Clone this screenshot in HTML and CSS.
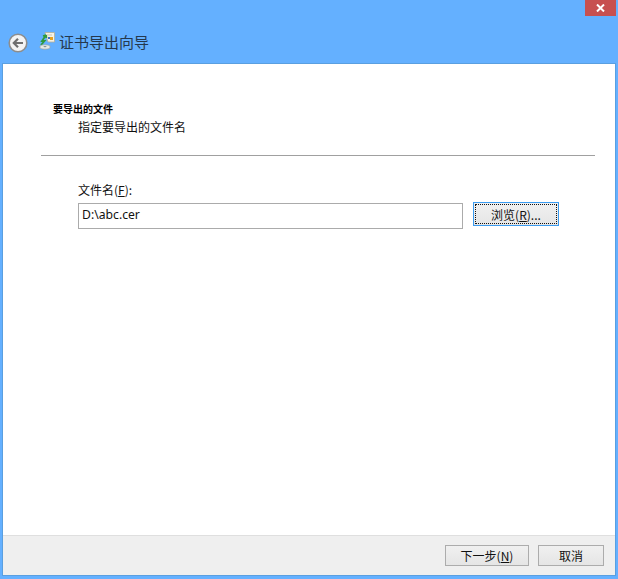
FILE: index.html
```html
<!DOCTYPE html>
<html lang="zh-CN">
<head>
<meta charset="utf-8">
<title>证书导出向导</title>
<link rel="stylesheet" href="styles.css">
</head>
<body>
<div class="window">
  <div class="titlebar">
    <div class="close"><svg width="9" height="8" viewBox="0 0 9 8"><path d="M1 0.5 L8 7.5 M8 0.5 L1 7.5" stroke="#fff" stroke-width="2"/></svg></div>
  </div>
  <div class="nav">
    <svg class="back" width="20" height="20" viewBox="0 0 20 20">
      <circle cx="10" cy="10" r="8.8" fill="#f4f4f4" stroke="#8d8d8d" stroke-width="1.6"/>
      <path d="M15 10 H6 M10 5.8 L5.8 10 L10 14.2" fill="none" stroke="#6f6f6f" stroke-width="2.2"/>
    </svg>
    <svg class="cert" width="16" height="18" viewBox="0 0 16 18">
      <path d="M6 0.5 H15.5 V10 H9 Z" fill="#f6f2e4" stroke="#b4ae98" stroke-width="0.8"/>
      <path d="M8 3 H13" stroke="#c9c4b2" stroke-width="1"/>
      <rect x="11" y="5" width="3" height="3" fill="#e6a21f"/>
      <rect x="9" y="5" width="2" height="2" fill="#3f6fc4"/>
      <path d="M7 3 L3 9 L5.5 9 L2 13 M7 3 L4 4 M7 3 L7.5 6" stroke="#2f9a3c" stroke-width="1.8" fill="none"/>
      <ellipse cx="6" cy="15" rx="5.2" ry="2.2" fill="#e6e9e6" stroke="#9aa5a5" stroke-width="0.7"/>
      <ellipse cx="6" cy="14.6" rx="1.6" ry="0.7" fill="#7e8f8f"/>
    </svg>
    <span class="nav-title">证书导出向导</span>
  </div>
  <div class="panel">
    <div class="main">
      <div class="head">
        <div class="head-title">要导出的文件</div>
        <div class="head-sub">指定要导出的文件名</div>
      </div>
      <div class="rule"></div>
      <div class="form">
        <div class="label">文件名(<u>F</u>):</div>
        <div class="row">
          <div class="input">D:\abc.cer</div>
          <div class="btn browse"><span class="focus">浏览(<u>R</u>)...</span></div>
        </div>
      </div>
    </div>
    <div class="footer">
      <div class="btn next">下一步(<u>N</u>)</div>
      <div class="btn cancel">取消</div>
    </div>
  </div>
</div>
</body>
</html>
```
FILE: styles.css
```css
html, body { margin: 0; padding: 0; height: 100%; }
body { background: #64b0ff; font-family: "Noto Sans CJK SC", "Liberation Sans", sans-serif; color: #111; overflow: hidden; }
.window { width: 618px; height: 579px; display: flex; flex-direction: column; box-sizing: border-box; padding: 0 2px 3px 2px; }
.titlebar { height: 16px; display: flex; justify-content: flex-end; flex: none; }
.close { width: 31px; height: 16px; margin-right: 0; background: #c75050; display: flex; align-items: center; justify-content: center; }
.nav { height: 47px; flex: none; display: flex; align-items: center; box-sizing: border-box; padding: 6px 0 0 6px; }
.back { flex: none; }
.cert { flex: none; margin-left: 11px; margin-bottom: 3px; }
.nav-title { font-size: 15px; line-height: 20px; margin: 0 0 2px 4px; color: #25384d; }
.panel { flex: 1; display: flex; flex-direction: column; background: #fff; border: 1px solid #5a9fe0; min-height: 0; }
.main { flex: 1; padding: 0 20px 0 38px; }
.head { padding: 38px 0 0 12px; height: 54px; box-sizing: content-box; }
.head-title { font-size: 10px; line-height: 14px; font-weight: 700; color: #000; }
.head-sub { font-size: 12px; line-height: 16px; margin: 3px 0 0 25px; color: #111; }
.rule { height: 1px; background: #a0a0a0; margin-top: -1px; }
.form { padding: 26px 0 0 37px; }
.label { font-size: 12px; line-height: 16px; }
.row { display: flex; margin-top: 5px; }
.input { width: 385px; height: 26px; box-sizing: border-box; border: 1px solid #ababab; font-size: 12.2px; line-height: 21px; padding: 0 3px; font-family: "Noto Sans", sans-serif; }
.btn { box-sizing: border-box; display: flex; align-items: center; justify-content: center; font-size: 12px; background: linear-gradient(#f0f0f0, #e5e5e5); border: 1px solid #acacac; color: #111; }
.browse { width: 86px; height: 24px; margin: -1px 0 0 10px; border-color: #3a9bf0; padding: 1px; }
.focus { flex: 1; align-self: stretch; display: flex; align-items: center; justify-content: center; border: 1px dotted #111; }
.footer { height: 40px; flex: none; box-sizing: border-box; background: #efefef; border-top: 1px solid #dfdfdf; display: flex; justify-content: flex-end; padding: 9px 11px 0 0; gap: 9px; }
.next { width: 84px; height: 21px; }
.cancel { width: 66px; height: 21px; }
```
